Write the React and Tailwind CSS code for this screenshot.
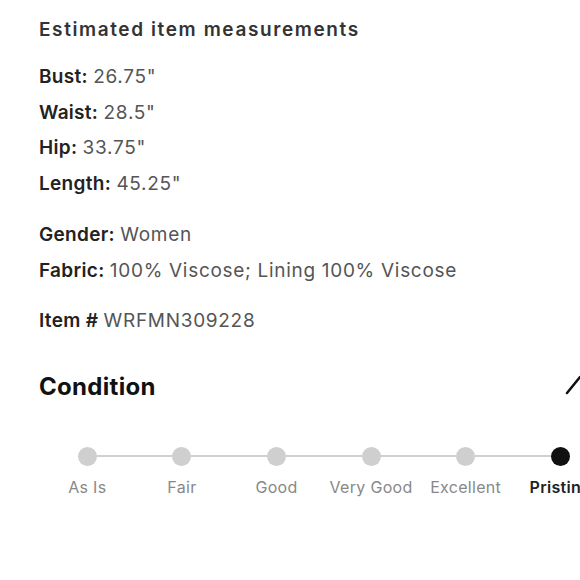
import React from 'react';

const measurements = [
  { label: 'Bust:', value: '26.75"' },
  { label: 'Waist:', value: '28.5"' },
  { label: 'Hip:', value: '33.75"' },
  { label: 'Length:', value: '45.25"' },
];

const steps = ['As Is', 'Fair', 'Good', 'Very Good', 'Excellent', 'Pristine'];
const activeStep = 5;

const Row = ({ label, value }) => (
  <p className="text-[19px] leading-[35.5px] text-[#555] whitespace-nowrap">
    <span className="font-semibold text-[#222] tracking-[0.3px]">{label}</span>{' '}
    <span className="tracking-[0.7px]">{value}</span>
  </p>
);

export default function App() {
  return (
    <div
      className="w-[580px] h-[580px] overflow-hidden bg-white"
      style={{ fontFamily: 'Inter, "Liberation Sans", sans-serif' }}
    >
      <div className="w-[590px] pl-[39px] pt-[18px]">
        <h3 className="text-[19px] leading-[24px] font-semibold tracking-[1.6px] text-[#333]">
          Estimated item measurements
        </h3>

        <div className="mt-[17px]">
          {measurements.map((m) => (
            <Row key={m.label} label={m.label} value={m.value} />
          ))}
        </div>

        <div className="mt-[16px]">
          <Row label="Gender:" value="Women" />
          <Row label="Fabric:" value="100% Viscose; Lining 100% Viscose" />
        </div>

        <div className="mt-[15px]">
          <Row label="Item #" value="WRFMN309228" />
        </div>

        <div className="mt-[32px] flex items-center justify-between">
          <h2 className="text-[24px] leading-[32px] font-bold tracking-[0.3px] text-[#111]">
            Condition
          </h2>
          <svg width="30" height="20" viewBox="0 0 30 20" className="mr-[-5px] mt-[-4px]">
            <polyline
              points="2,18 15,2 28,18"
              fill="none"
              stroke="#111"
              strokeWidth="2.5"
              strokeLinecap="round"
              strokeLinejoin="round"
            />
          </svg>
        </div>

        <div className="mt-[44px] flex w-[640px] ml-[1px]">
          {steps.map((step, i) => {
            const active = i === activeStep;
            return (
              <div key={step} className="w-[94.6px] shrink-0 flex flex-col items-center relative">
                {i > 0 && (
                  <div className="absolute top-[8px] left-[-38px] w-[76px] h-[2px] bg-[#d0d0d0]" />
                )}
                <div
                  className={
                    active
                      ? 'w-[19px] h-[19px] rounded-full bg-[#111]'
                      : 'w-[19px] h-[19px] rounded-full bg-[#cfcfcf]'
                  }
                />
                <span
                  className={
                    active
                      ? 'mt-[11px] text-[16px] leading-[20px] font-semibold tracking-[0.3px] text-[#222] whitespace-nowrap'
                      : 'mt-[11px] text-[16px] leading-[20px] tracking-[0.3px] text-[#888] whitespace-nowrap'
                  }
                >
                  {step}
                </span>
              </div>
            );
          })}
        </div>
      </div>
    </div>
  );
}
